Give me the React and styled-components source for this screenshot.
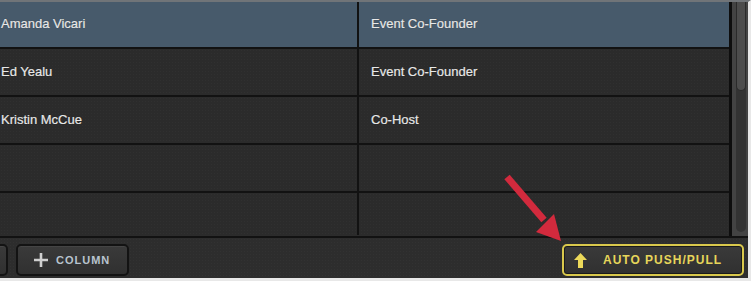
import React from "react";
import styled, { createGlobalStyle } from "styled-components";

const Global = createGlobalStyle`
  html, body { margin: 0; padding: 0; background: #e8e8e8; }
  body { font-family: "Liberation Sans", Arial, sans-serif; }
`;

const Frame = styled.div`
  position: relative;
  width: 751px;
  height: 281px;
  box-sizing: border-box;
  border-top: 2px solid #707478;
  border-right: 3px solid #e8e8e8;
  border-bottom: 3px solid #e8e8e8;
  background: #2c2c2c;
  display: flex;
  flex-direction: column;
  overflow: hidden;
`;

const TableArea = styled.div`
  display: flex;
  height: 234px;
  border-bottom: 2px solid #121212;
`;

const Grid = styled.div`
  width: 729px;
  display: flex;
  flex-direction: column;
  overflow: hidden;
`;

const Row = styled.div`
  display: grid;
  grid-template-columns: 357px 2px 370px;
  flex: 0 0 auto;
  height: ${(p) => p.$h}px;
  border-bottom: ${(p) => (p.$last ? "0" : "2px solid #121212")};
  background: ${(p) =>
    p.$selected
      ? "#475a6b"
      : "radial-gradient(rgba(255,255,255,0.025) 0.6px, transparent 0.8px) 0 0 / 3px 3px, #2b2b2b"};
`;

const Cell = styled.div`
  display: flex;
  align-items: center;
  padding-left: ${(p) => p.$pad}px;
  padding-bottom: 2px;
  font-size: 13px;
  color: #e8e8e8;
  -webkit-text-stroke: 0.2px #e8e8e8;
  text-shadow: 0 0 1px rgba(0, 0, 0, 0.4);
  white-space: nowrap;
  overflow: hidden;
`;

const ColDivider = styled.div`
  background: #121212;
`;

const EdgeDivider = styled.div`
  width: 3px;
  background: #0e0e0e;
`;

const ScrollBar = styled.div`
  width: 16px;
  background: #434343;
  padding: 0 2px 4px 4px;
  box-sizing: border-box;
  display: flex;
`;

const Track = styled.div`
  flex: 1;
  background: #333;
  border-radius: 0 0 5px 5px;
  display: flex;
  flex-direction: column;
`;

const Thumb = styled.div`
  height: 88px;
  background: #4c4c4c;
  border-radius: 0 0 5px 5px;
  border: 1px solid #2a2a2a;
  border-top: 0;
`;

const Toolbar = styled.div`
  flex: 1;
  display: flex;
  align-items: flex-start;
  padding-top: 6px;
  background: radial-gradient(rgba(255,255,255,0.025) 0.6px, transparent 0.8px) 0 0 / 3px 3px, #2d2d2d;
`;

const Button = styled.button`
  height: 32px;
  box-sizing: border-box;
  display: flex;
  align-items: center;
  gap: ${(p) => p.$gap || 8}px;
  font-family: "Liberation Sans", Arial, sans-serif;
  font-weight: bold;
  font-size: ${(p) => p.$size || 11}px;
  letter-spacing: ${(p) => p.$ls || 1}px;
  color: ${(p) => (p.$accent ? "#e6d55a" : "#b9c4cf")};
  background: linear-gradient(#3a3a3a, #303030);
  border: ${(p) => (p.$accent ? "2px solid #d9c84c" : "2px solid #131313")};
  border-radius: 5px;
  box-shadow: ${(p) =>
    p.$accent ? "inset 0 0 0 1px #1a1a1a" : "inset 0 1px 0 rgba(255,255,255,0.06)"};
  padding: ${(p) => p.$pad || "0"};
  margin-left: ${(p) => p.$ml || 0}px;
  width: ${(p) => p.$w}px;
  cursor: pointer;
`;

const Spacer = styled.div`
  flex: 1;
`;

const Pointer = styled.svg`
  position: absolute;
  left: 500px;
  top: 170px;
  pointer-events: none;
`;

const rows = [
  { name: "Amanda Vicari", role: "Event Co-Founder", h: 45, selected: true },
  { name: "Ed Yealu", role: "Event Co-Founder", h: 46 },
  { name: "Kristin McCue", role: "Co-Host", h: 46 },
  { name: "", role: "", h: 46 },
  { name: "", role: "", h: 42, last: true },
];

export default function App() {
  return (
    <>
      <Global />
      <Frame>
        <TableArea>
          <Grid>
            {rows.map((r, i) => (
              <Row key={i} $h={r.h} $selected={r.selected} $last={r.last}>
                <Cell $pad={1}>{r.name}</Cell>
                <ColDivider />
                <Cell $pad={12}>{r.role}</Cell>
              </Row>
            ))}
          </Grid>
          <EdgeDivider />
          <ScrollBar>
            <Track>
              <Thumb />
            </Track>
          </ScrollBar>
        </TableArea>
        <Toolbar>
          <Button $w={16} $ml={-8} aria-label="previous" />
          <Button $w={113} $ml={8} $pad="0 0 0 16px" $gap={8}>
            <svg width="14" height="14" viewBox="0 0 14 14">
              <path d="M7 0v14M0 7h14" stroke="#cfcfcf" strokeWidth="2.6" />
            </svg>
            COLUMN
          </Button>
          <Spacer />
          <Button $accent $w={182} $pad="0 0 0 10px" $gap={16} $size={12} $ls={1}>
            <svg width="13" height="15" viewBox="0 0 13 15">
              <path d="M6.5 0L13 7H9V15H4V7H0Z" fill="#ecd95a" />
            </svg>
            AUTO PUSH/PULL
          </Button>
          <div style={{ width: 4 }} />
        </Toolbar>
        <Pointer width="70" height="72" viewBox="0 0 70 72">
          <line x1="7" y1="5" x2="44" y2="48" stroke="#d22a3d" strokeWidth="7" strokeLinecap="butt" />
          <polygon points="36,60 54,42 61,69" fill="#d22a3d" />
        </Pointer>
      </Frame>
    </>
  );
}
